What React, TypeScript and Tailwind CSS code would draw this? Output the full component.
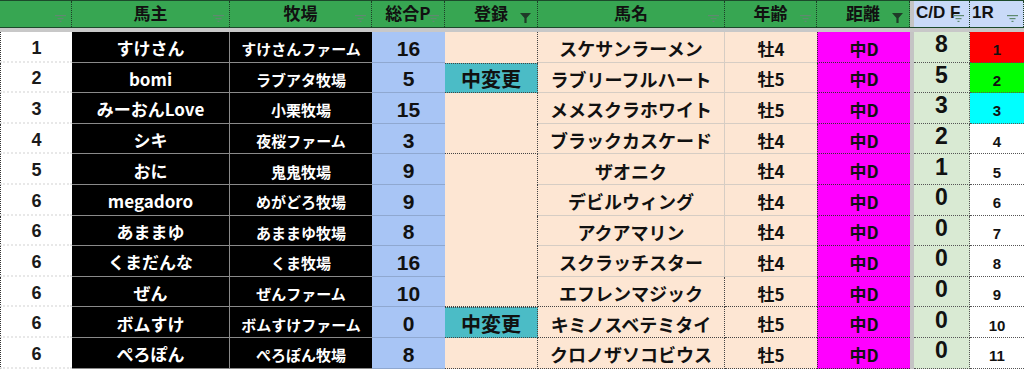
const COLS =
  "grid grid-cols-[72px_158px_142px_73px_93px_187px_92px_93px_4px_56px_1fr]";

const JP = "font-['Noto_Sans_CJK_JP','Noto_Sans',sans-serif]";

type Row = {
  rank: number;
  owner: string;
  farm: string;
  total: number;
  entry: string;
  horse: string;
  age: string;
  dist: string;
  cd: number;
  r1: number;
  r1Bg: string;
};

const rows: Row[] = [
  { rank: 1, owner: "すけさん", farm: "すけさんファーム", total: 16, entry: "", horse: "スケサンラーメン", age: "牡4", dist: "中D", cd: 8, r1: 1, r1Bg: "bg-[#ff0000]" },
  { rank: 2, owner: "bomi", farm: "ラブアタ牧場", total: 5, entry: "中変更", horse: "ラブリーフルハート", age: "牡5", dist: "中D", cd: 5, r1: 2, r1Bg: "bg-[#00ff00]" },
  { rank: 3, owner: "みーおんLove", farm: "小栗牧場", total: 15, entry: "", horse: "メメスクラホワイト", age: "牡5", dist: "中D", cd: 3, r1: 3, r1Bg: "bg-[#00ffff]" },
  { rank: 4, owner: "シキ", farm: "夜桜ファーム", total: 3, entry: "", horse: "ブラックカスケード", age: "牡4", dist: "中D", cd: 2, r1: 4, r1Bg: "bg-white" },
  { rank: 5, owner: "おに", farm: "鬼鬼牧場", total: 9, entry: "", horse: "ザオニク", age: "牡4", dist: "中D", cd: 1, r1: 5, r1Bg: "bg-white" },
  { rank: 6, owner: "megadoro", farm: "めがどろ牧場", total: 9, entry: "", horse: "デビルウィング", age: "牡4", dist: "中D", cd: 0, r1: 6, r1Bg: "bg-white" },
  { rank: 6, owner: "あままゆ", farm: "あままゆ牧場", total: 8, entry: "", horse: "アクアマリン", age: "牡4", dist: "中D", cd: 0, r1: 7, r1Bg: "bg-white" },
  { rank: 6, owner: "くまだんな", farm: "くま牧場", total: 16, entry: "", horse: "スクラッチスター", age: "牡4", dist: "中D", cd: 0, r1: 8, r1Bg: "bg-white" },
  { rank: 6, owner: "ぜん", farm: "ぜんファーム", total: 10, entry: "", horse: "エフレンマジック", age: "牡5", dist: "中D", cd: 0, r1: 9, r1Bg: "bg-white" },
  { rank: 6, owner: "ボムすけ", farm: "ボムすけファーム", total: 0, entry: "中変更", horse: "キミノスベテミタイ", age: "牡5", dist: "中D", cd: 0, r1: 10, r1Bg: "bg-white" },
  { rank: 6, owner: "ぺろぽん", farm: "ぺろぽん牧場", total: 8, entry: "", horse: "クロノザソコビウス", age: "牡5", dist: "中D", cd: 0, r1: 11, r1Bg: "bg-white" },
];

function SortIcon() {
  return (
    <svg width="11" height="7" viewBox="0 0 11 7" className="absolute right-[5px] top-[14px]">
      <rect x="0" y="0" width="11" height="1.2" fill="#5f8a70" />
      <rect x="2.5" y="3" width="6" height="1.2" fill="#5f8a70" />
      <rect x="4.5" y="5.8" width="2" height="1.2" fill="#5f8a70" />
    </svg>
  );
}

function FunnelIcon() {
  return (
    <svg width="11" height="10" viewBox="0 0 11 10" className="absolute right-[6px] top-[12px]">
      <path d="M0 0 H11 L6.6 5 V10 H4.4 V5 Z" fill="#1f3a28" />
    </svg>
  );
}

function Head({
  label,
  icon = "sort",
  blue = false,
  left = false,
}: {
  label: string;
  icon?: "sort" | "funnel";
  blue?: boolean;
  left?: boolean;
}) {
  return (
    <div
      className={`relative h-full whitespace-nowrap border-r border-dotted border-[#1d3d28] flex items-center pb-[3px] leading-none text-[17px] font-bold text-[#111] ${
        blue ? "bg-[#c9daf8]" : "bg-[#37a652]"
      } ${left ? "justify-start pl-[2px] text-[15px] font-['Liberation_Sans',sans-serif]" : "justify-center"}`}
    >
      {label}
      {icon === "sort" ? <SortIcon /> : <FunnelIcon />}
    </div>
  );
}

export default function App() {
  return (
    <div className={`w-full h-[370px] overflow-hidden bg-white ${JP}`}>
      {/* header */}
      <div className={`${COLS} h-[28px] border-t border-b border-[#1c4a2b]`}>
        <Head label="" />
        <Head label="馬主" />
        <Head label="牧場" />
        <Head label="総合P" />
        <Head label="登録" icon="funnel" />
        <Head label="馬名" />
        <Head label="年齢" />
        <Head label="距離" icon="funnel" />
        <div className="bg-[#c4c4c4]" />
        <Head label="C/D F" blue left />
        <Head label="1R" blue left />
      </div>
      <div className="h-[4px] bg-[#c8c8c8]" />

      {rows.map((r, i) => {
        const dotted = i >= 8;
        return (
          <div key={i} className={`${COLS} h-[30.6px] leading-none`}>
            <div className="flex items-center justify-center pt-[3px] border-l border-dotted border-l-[#333] border-b-2 border-b-[#e8e8e8] text-[18px] font-bold text-[#1a1a1a] font-['Liberation_Sans','Noto_Sans_CJK_JP',sans-serif]">
              {r.rank}
            </div>
            <div className="flex items-center justify-center pt-[2px] bg-black border-r border-b border-[#8a8a8a] text-[17px] font-bold text-white">
              {r.owner}
            </div>
            <div className="flex items-center justify-center pt-[4px] bg-black border-b border-[#8a8a8a] text-[15px] font-bold text-white">
              {r.farm}
            </div>
            <div className="flex items-center justify-center pt-[3px] bg-[#a8c5f5] border-b border-[#8fa8d0] text-[21px] font-bold text-[#111] font-['Liberation_Sans','Noto_Sans',sans-serif]">
              {r.total}
            </div>
            <div
              className={`flex items-center justify-center pt-[3px] border-r border-dotted border-[#444] text-[20px] font-bold text-[#111] ${
                r.entry ? "bg-[#4bbcc6] border-b border-t" : "bg-[#fde6d3]"
              } ${r.rank === 4 || (dotted && !r.entry) ? "border-b" : ""}`}
            >
              {r.entry}
            </div>
            <div
              className={`flex items-center justify-center pt-[3px] bg-[#fde6d3] border-r text-[18px] font-bold text-[#111] ${
                dotted ? "border-b border-dotted border-[#444]" : "border-b border-[#d6cdc4]"
              }`}
            >
              {r.horse}
            </div>
            <div
              className={`flex items-center justify-center pt-[3px] bg-[#fde6d3] text-[17px] font-bold text-[#111] border-b ${
                dotted ? "border-dotted border-[#444]" : "border-[#d6cdc4]"
              }`}
            >
              {r.age}
            </div>
            <div className="flex items-center justify-center pt-[3px] bg-[#ff00ff] border-l border-b border-dotted border-[#333] text-[17px] font-bold text-[#111]">
              {r.dist}
            </div>
            <div className="bg-[#c4c4c4]" />
            <div className="flex items-center justify-center pb-[4px] bg-[#d9ead3] border-r border-b border-dotted border-[#555] text-[23px] font-bold text-[#111] font-['Liberation_Sans','Noto_Sans',sans-serif]">
              {r.cd}
            </div>
            <div
              className={`flex items-center justify-center pt-[6px] border-b border-dotted border-[#555] text-[15px] font-bold text-[#111] font-['Liberation_Sans','Noto_Sans',sans-serif] ${r.r1Bg}`}
            >
              {r.r1}
            </div>
          </div>
        );
      })}
    </div>
  );
}
